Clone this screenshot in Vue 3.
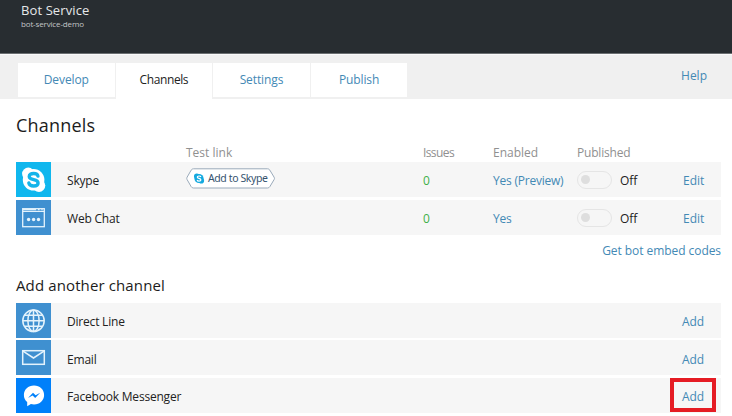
<script setup>
const tabs = [
  { name: 'Develop' },
  { name: 'Channels', active: true },
  { name: 'Settings' },
  { name: 'Publish' }
]
const active = [
  { name: 'Skype', icon: 'skype', enabled: 'Yes (Preview)', test: true },
  { name: 'Web Chat', icon: 'chat', enabled: 'Yes' }
]
const more = [
  { name: 'Direct Line', icon: 'globe' },
  { name: 'Email', icon: 'mail' },
  { name: 'Facebook Messenger', icon: 'messenger', marked: true }
]
</script>

<template>
  <div class="page">
    <header class="top">
      <div class="brand">Bot Service</div>
      <div class="sub">bot-service-demo</div>
    </header>
    <nav class="nav">
      <div class="tabs">
        <a v-for="t in tabs" :key="t.name" class="tab" :class="{ active: t.active }">{{ t.name }}</a>
      </div>
      <a class="help">Help</a>
    </nav>
    <main>
      <h1>Channels</h1>
      <div class="grid heads">
        <span class="c-test">Test link</span>
        <span class="c-issues">Issues</span>
        <span class="c-enabled">Enabled</span>
        <span class="c-pub">Published</span>
      </div>
      <div class="rows">
        <div v-for="r in active" :key="r.name" class="grid row" :class="{ lower: !r.test }">
          <div class="tile" :class="r.icon">
            <svg v-if="r.icon === 'skype'" width="35" height="35" viewBox="0 0 35 35">
              <g fill="#fff">
                <circle cx="17.6" cy="17.8" r="10.8" />
                <circle cx="12.3" cy="11.8" r="6.2" />
                <circle cx="23" cy="23.6" r="6.3" />
              </g>
              <path d="M22 14.2C21.6 12 19.8 11.5 17.6 11.5C15 11.5 13.2 12.5 13.2 14.4C13.2 16.6 15.3 17.1 17.7 17.6C20.2 18.1 22.1 18.7 22.1 20.9C22.1 23 20.1 24 17.6 24C15 24 13.2 23 12.8 20.9" fill="none" stroke="#14b4ea" stroke-width="3.3" stroke-linecap="round" />
            </svg>
            <svg v-else width="35" height="35" viewBox="0 0 35 35">
              <rect x="6.7" y="8.7" width="21.6" height="18" fill="none" stroke="#e4f3fc" stroke-width="1.3" />
              <path d="M6.5 11.4H28.5" stroke="#e4f3fc" stroke-width="1.2" />
              <path d="M7 9.6H20M22 9.6H23.6M25.4 9.6H26.6" stroke="#e4f3fc" stroke-width="1.4" />
              <g fill="#e4f3fc"><circle cx="12.6" cy="19.5" r="1.7" /><circle cx="17.6" cy="19.5" r="1.7" /><circle cx="22.5" cy="19.5" r="1.7" /></g>
            </svg>
          </div>
          <span class="name">{{ r.name }}</span>
          <div class="test">
            <div v-if="r.test" class="skype-btn">
              <svg class="outline" width="90" height="21" viewBox="0 0 90 21">
                <path d="M7.5 .8H81.5Q83 .8 83.8 2.1L88.1 9.2Q88.9 10.4 88.1 11.6L83.8 18.7Q83 20 81.5 20H7.5Q6 20 5.2 18.7L1.1 11.6Q.4 10.4 1.1 9.2L5.2 2.1Q6 .8 7.5 .8Z" fill="#fff" stroke="#9aaaba" />
                <g fill="#14a9df"><circle cx="13" cy="10.5" r="4.6" /><circle cx="10.8" cy="8.3" r="2.8" /><circle cx="15.3" cy="12.8" r="2.8" /></g>
                <path d="M14.9 9C14.5 7.7 11.4 7.6 11.3 9.1C11.2 10.8 14.9 10 14.9 11.9C14.8 13.5 11.5 13.4 11.1 12" fill="none" stroke="#fff" stroke-width="1.2" />
              </svg>
              <span class="btn-text">Add to Skype</span>
            </div>
          </div>
          <span class="zero">0</span>
          <a class="enabled">{{ r.enabled }}</a>
          <div class="switch"><i class="track"><i class="knob"></i></i><span class="off">Off</span></div>
          <a class="edit">Edit</a>
        </div>
      </div>
      <div class="embed"><a>Get bot embed codes</a></div>
      <h2>Add another channel</h2>
      <div class="rows">
        <div v-for="r in more" :key="r.name" class="row add-row lower">
          <div class="tile" :class="r.icon">
            <svg v-if="r.icon === 'globe'" width="35" height="35" viewBox="0 0 35 35" fill="none" stroke="#e4f3fc" stroke-width="1.5">
              <circle cx="17.5" cy="17.8" r="10.7" />
              <ellipse cx="17.5" cy="17.8" rx="5.6" ry="10.7" />
              <path d="M17.5 7V28.5M6.8 17.8H28.2M8.3 12.3H26.7M8.3 23.3H26.7" />
            </svg>
            <svg v-else-if="r.icon === 'mail'" width="35" height="35" viewBox="0 0 35 35" fill="none" stroke="#e4f3fc" stroke-width="1.5">
              <rect x="6.7" y="10.7" width="21.6" height="13.6" />
              <path d="M7 11.2L17.5 18L28 11.2" />
            </svg>
            <svg v-else width="35" height="35" viewBox="0 0 35 35">
              <path d="M18 7.6C12.2 7.6 7.9 11.7 7.9 17C7.9 20 9.1 22.4 11.2 24.1V28.2L14.9 26.1C15.9 26.4 16.9 26.5 18 26.5C23.8 26.5 28.1 22.3 28.1 17C28.1 11.7 23.8 7.6 18 7.6Z" fill="#fff" />
              <path d="M12 20.1L17 14.7L19.6 17.3L24.2 14.7L19.2 20.1L16.6 17.5Z" fill="#0080fa" />
            </svg>
          </div>
          <span class="name">{{ r.name }}</span>
          <a class="add" :class="{ marked: r.marked }">Add</a>
        </div>
      </div>
    </main>
  </div>
</template>

<style>
body { margin: 0; background: #fff; overflow: hidden; }
</style>
<style scoped>
.page { width: 732px; height: 416px; overflow: hidden; background: #fff; color: #222; font: 12px/16px "Open Sans", "Noto Sans", sans-serif; white-space: nowrap; }
.top { box-sizing: border-box; height: 54px; padding: 2px 0 0 21px; background: #282d31; border-bottom: 1px solid #6b6f72; }
.brand { font-size: 13px; line-height: 17px; color: #e6e8e9; letter-spacing: .1px; }
.sub { font-size: 8px; line-height: 10px; color: #c3c6c8; letter-spacing: -.15px; }
.nav { box-sizing: border-box; height: 45px; padding: 8px 25px 0 18px; display: flex; justify-content: space-between; background: #f0f0f0; border-top: 1px solid #fafafa; }
a { color: #4389b5; }
.tabs { display: flex; gap: 1px; }
.tab { box-sizing: border-box; width: 96.6px; height: 34px; background: #fff; text-align: center; line-height: 34px; letter-spacing: -.1px; }
.tab.active { height: 36px; color: #222; letter-spacing: -.4px; }
.help { line-height: 25px; }
main { padding: 0 11px 0 16px; }
h1, h2 { margin: 0; font-weight: 400; color: #1c1c1c; }
h1 { padding-top: 13px; font-size: 18px; line-height: 26px; letter-spacing: .2px; }
h2 { font-size: 15px; line-height: 20px; padding: 16px 0 8px; letter-spacing: .12px; }
.grid { display: grid; grid-template-columns: 51px 119px 237px 70px 84px 106px 38px; align-items: center; }
.heads { height: 24px; color: #909090; }
.heads span { line-height: 16px; padding-top: 5px; }
.c-test { grid-column: 3; }
.c-issues { letter-spacing: -.6px; }
.c-pub { letter-spacing: -.2px; }
.rows { display: flex; flex-direction: column; gap: 2.5px; }
.row { height: 35px; background: #f6f6f6; }
.name, .zero, .enabled, .edit { padding-top: 2px; }
.lower .name, .lower .zero, .lower .enabled, .lower .edit { padding-top: 4px; }
.name { letter-spacing: -.2px; }
.tile { width: 35px; height: 35px; background: #3f90d0; }
.tile svg { display: block; }
.tile.skype { background: #10b7ee; }
.tile.messenger { background: #0080fa; }
.skype-btn { position: relative; width: 90px; height: 21px; margin-top: -3px; }
.outline { display: block; }
.btn-text { position: absolute; left: 22px; top: 2px; font: 10.5px/16px "Noto Sans", sans-serif; letter-spacing: -.4px; color: #35536f; }
.zero { color: #3fb049; }
.enabled { letter-spacing: -.22px; }
.switch { display: flex; align-items: center; gap: 8px; padding-top: 1px; }
.track { box-sizing: border-box; display: block; width: 35px; height: 18px; border: 1px solid #e5e5e5; border-radius: 9px; padding: 3px; }
.knob { display: block; width: 9px; height: 9px; border-radius: 50%; background: #dedede; }
.off { padding-top: 1px; }
.lower .off { padding-top: 3px; }
.embed { display: flex; justify-content: flex-end; padding-top: 8px; height: 16px; letter-spacing: -.06px; }
.add-row { display: grid; grid-template-columns: 51px 1fr 51px; align-items: center; }
.add { padding: 4px 0 0 12px; letter-spacing: -.1px; }
.add.marked { box-sizing: border-box; width: 46px; height: 34px; padding: 1px 0 0 8px; border: 4px solid #e51c24; line-height: 27px; }
</style>
